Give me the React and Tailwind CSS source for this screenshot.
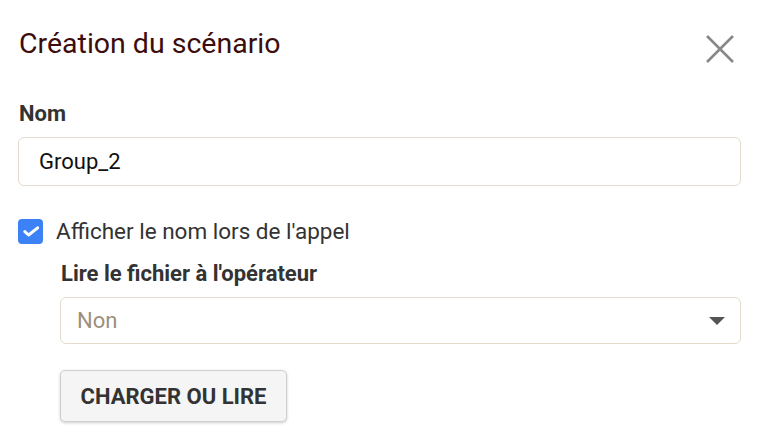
import React from "react";

export default function App() {
  return (
    <div className="w-[760px] h-[444px] bg-white overflow-hidden font-['Roboto',sans-serif]">
      <div className="flex items-start justify-between pl-[19px] pr-[26px] pt-[26px]">
        <h1 className="text-[28.5px] leading-[36px] text-[#3d0c0c]">Création du scénario</h1>
        <svg width="28" height="28" viewBox="0 0 28 28" className="mt-[9px]">
          <path d="M1 1 L27 27 M27 1 L1 27" stroke="#888888" strokeWidth="2.6" />
        </svg>
      </div>
      <div className="pl-[18px] pr-[19px] pt-[39px]">
        <div className="text-[22px] leading-[24px] font-bold text-[#333] pl-px">Nom</div>
        <div className="mt-[11px] h-[49px] border border-[#e3dccd] rounded-[6px] flex items-center pl-[20px] text-[22px] text-[#111]">
          Group_2
        </div>
        <div className="mt-[31px] flex items-center gap-[13px]">
          <div className="w-[25px] h-[25px] rounded-[4px] bg-[#3c82f6]">
            <svg width="25" height="25" viewBox="0 0 25 25">
              <path d="M6.8 12.6 L10.6 16 L19.6 8.8" stroke="white" strokeWidth="3" fill="none" strokeLinecap="round" strokeLinejoin="round" />
            </svg>
          </div>
          <span className="text-[22.5px] leading-[28px] text-[#333]">Afficher le nom lors de l'appel</span>
        </div>
        <div className="pl-[42px]">
          <div className="mt-[17px] text-[22px] leading-[24px] font-bold text-[#333] pl-px">Lire le fichier à l'opérateur</div>
          <div className="mt-[11px] h-[47px] border border-[#e3dccd] rounded-[6px] flex items-center justify-between pl-[16px] pr-[15px] text-[22px] text-[#9b8f7f]">
            <span>Non</span>
            <svg width="16" height="8" viewBox="0 0 16 8">
              <path d="M0 0 L16 0 L8 8 Z" fill="#555" />
            </svg>
          </div>
          <button className="mt-[26px] h-[52px] w-[227px] bg-[#f5f5f5] border border-[#d0d0d0] rounded-[5px] shadow-[0_1px_3px_rgba(0,0,0,0.2)] text-[22px] font-bold text-[#333]">
            CHARGER OU LIRE
          </button>
        </div>
      </div>
    </div>
  );
}
